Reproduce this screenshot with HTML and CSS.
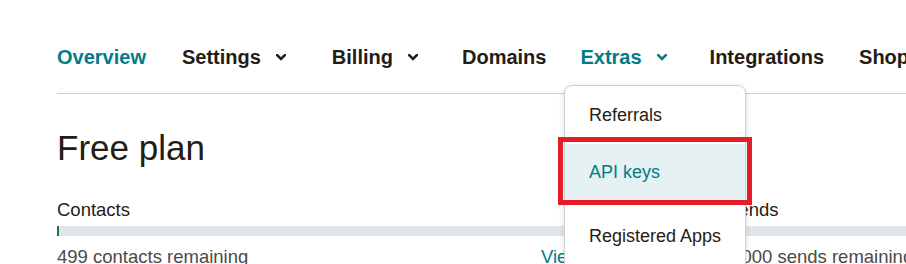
FILE: index.html
```html
<!DOCTYPE html>
<html>
<head>
<meta charset="utf-8">
<link rel="stylesheet" href="styles.css">
</head>
<body>
<div class="page">
  <nav class="nav">
    <a class="nav-item active">Overview</a>
    <a class="nav-item has-menu">Settings<svg class="chev" viewBox="0 0 10 7"><path d="M1.2 1.2 L5 5 L8.8 1.2"/></svg></a>
    <a class="nav-item has-menu tight">Billing<svg class="chev" viewBox="0 0 10 7"><path d="M1.2 1.2 L5 5 L8.8 1.2"/></svg></a>
    <a class="nav-item tight">Domains</a>
    <a class="nav-item has-menu active tighter">Extras<svg class="chev" viewBox="0 0 10 7"><path d="M1.2 1.2 L5 5 L8.8 1.2"/></svg></a>
    <a class="nav-item slight">Integrations</a>
    <a class="nav-item">Shop</a>
  </nav>
  <h1 class="title">Free plan</h1>
  <div class="usage">
    <div class="usage-col">
      <div class="usage-label">Contacts</div>
      <div class="bar"><div class="bar-fill" style="width:2px"></div></div>
      <div class="usage-row"><span>499 contacts remaining</span><a class="link">View contact usage</a></div>
    </div>
    <div class="usage-col">
      <div class="usage-label">Sends</div>
      <div class="bar"><div class="bar-fill" style="width:0"></div></div>
      <div class="usage-row"><span>1,000 sends remaining</span></div>
    </div>
  </div>
</div>
<div class="menu">
  <div class="menu-item">Referrals</div>
  <div class="menu-item selected">API keys</div>
  <div class="menu-item last">Registered Apps</div>
</div>
<div class="highlight"></div>
</body>
</html>
```
FILE: styles.css
```css
html, body {
  margin: 0;
  padding: 0;
  background: #ffffff;
  overflow: hidden;
  width: 906px;
  height: 264px;
}
body {
  font-family: "Liberation Sans", Arial, sans-serif;
  color: #241c15;
  position: relative;
}
.page {
  padding-left: 57px;
  width: 1100px;
}
.nav {
  display: flex;
  align-items: center;
  gap: 36px;
  padding-top: 45px;
  padding-bottom: 24px;
  border-bottom: 1px solid #c8cfd6;
  white-space: nowrap;
}
.nav-item {
  display: flex;
  align-items: center;
  font-size: 20px;
  line-height: 24px;
  font-weight: 700;
  color: #241c15;
}
.nav-item.active {
  color: #007c89;
}
.nav-item.has-menu {
  padding-right: 10px;
}
.nav-item.tight {
  margin-right: -2px;
}
.nav-item.tighter {
  margin-right: -3px;
}
.nav-item.slight {
  margin-right: -1px;
}
.chev {
  width: 10px;
  height: 7px;
  margin-left: 15px;
  margin-top: 1px;
  fill: none;
  stroke: currentColor;
  stroke-width: 2.6;
  stroke-linecap: square;
}
.title {
  margin: 32px 0 0 0;
  font-size: 35px;
  line-height: 44px;
  font-weight: 400;
  color: #241c15;
}
.usage {
  display: grid;
  grid-template-columns: 644px 400px;
  column-gap: 25px;
  margin-top: 29px;
}
.usage-label {
  font-size: 18.5px;
  line-height: 22px;
  color: #241c15;
}
.bar {
  margin-top: 5px;
  height: 10px;
  background: #e0e6ea;
}
.bar-fill {
  height: 100%;
  background: #1f7a3a;
}
.usage-row {
  display: flex;
  justify-content: space-between;
  margin-top: 10px;
  font-size: 18.5px;
  line-height: 22px;
  color: #4a4a4a;
}
.link {
  color: #007c89;
}
.menu {
  position: absolute;
  left: 564px;
  top: 85px;
  width: 180px;
  height: 200px;
  padding-top: 1px;
  background: #ffffff;
  border: 1px solid #cdd1d4;
  border-radius: 8px;
  box-shadow: 0 2px 6px rgba(0, 0, 0, 0.14);
}
.menu-item {
  height: 57px;
  padding-left: 24px;
  display: flex;
  align-items: center;
  font-size: 18px;
  color: #241c15;
}
.menu-item.selected {
  height: 56px;
  color: #007c89;
  background: #e5f1f3;
}
.menu-item.last {
  margin-top: 8px;
  height: 57px;
}
.highlight {
  position: absolute;
  left: 558px;
  top: 137px;
  width: 184px;
  height: 58px;
  border: 5px solid #e41e26;
}
```
